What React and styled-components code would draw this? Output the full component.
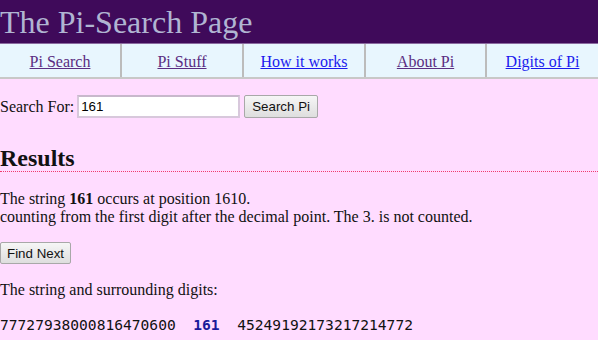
import React from "react";
import styled, { createGlobalStyle } from "styled-components";

const GlobalStyle = createGlobalStyle`
  html, body {
    margin: 0;
    padding: 0;
    background: #ffdcff;
  }
  body {
    font-family: "Liberation Serif", "Times New Roman", serif;
    font-size: 16px;
    color: #111;
  }
`;

const Header = styled.div`
  background: #3f0a5a;
  height: 43px;
  display: flex;
  align-items: center;
`;

const Title = styled.h1`
  margin: 0;
  font-weight: normal;
  font-size: 32px;
  color: #b0b5d2;
  line-height: 43px;
  padding-top: 1px;
`;

const Nav = styled.nav`
  display: grid;
  grid-template-columns: 120px 122px 122px 121px 1fr;
  background: #e8f6fe;
  border-top: 1px solid #8a6aa0;
  border-bottom: 2px solid #c8c8c8;
`;

const NavCell = styled.div`
  height: 33px;
  display: flex;
  align-items: center;
  justify-content: center;
  border-left: ${(p) => (p.first ? "none" : "2px solid #bcbcbc")};
`;

const NavLink = styled.a`
  color: ${(p) => (p.visited ? "#5a2d82" : "#1a1aee")};
  text-decoration: underline;
  font-size: 16px;
  padding-top: 2px;
`;

const SearchRow = styled.form`
  display: flex;
  align-items: center;
  margin-top: 16px;
  height: 23px;
`;

const Label = styled.span`
  margin-right: 3px;
`;

const Input = styled.input`
  box-sizing: border-box;
  width: 163px;
  height: 23px;
  border: 2px solid #d8c8dc;
  border-top-color: #c8b8cc;
  padding: 1px 2px;
  font-family: "Liberation Sans", Arial, sans-serif;
  font-size: 13.33px;
  background: #fff;
  margin-right: 4px;
`;

const Button = styled.button`
  box-sizing: border-box;
  height: ${(p) => p.h || 23}px;
  padding: 0 ${(p) => p.px || 7}px;
  font-family: "Liberation Sans", Arial, sans-serif;
  font-size: 13.33px;
  color: #111;
  background: linear-gradient(#f6f6f6, #dedede);
  border: 1px solid #a8a8a8;
  border-radius: 2px;
`;

const Results = styled.h2`
  margin: 27px 0 0;
  font-size: 24px;
  font-weight: bold;
  line-height: 26px;
  border-bottom: 1px dotted #f03c6e;
`;

const Para = styled.p`
  margin: ${(p) => p.m || "16px 0 0"};
  line-height: 18px;
`;

const Digits = styled.pre`
  margin: 17px 0 0;
  font-family: "DejaVu Sans Mono", "Liberation Mono", monospace;
  font-size: 14.6px;
  color: #111;
`;

const Hit = styled.span`
  color: #1a1a9a;
  font-weight: bold;
`;

const links = [
  ["Pi Search", true],
  ["Pi Stuff", true],
  ["How it works", false],
  ["About Pi", true],
  ["Digits of Pi", false],
];

const App = () => {
  return (
    <>
      <GlobalStyle />
      <Header>
        <Title>The Pi-Search Page</Title>
      </Header>
      <Nav>
        {links.map(([text, visited], i) => (
          <NavCell key={text} first={i === 0}>
            <NavLink href="#" visited={visited}>
              {text}
            </NavLink>
          </NavCell>
        ))}
      </Nav>
      <SearchRow onSubmit={(e) => e.preventDefault()}>
        <Label>Search For:</Label>
        <Input defaultValue="161" />
        <Button type="submit">Search Pi</Button>
      </SearchRow>
      <Results>Results</Results>
      <Para m="18px 0 0">
        The string <b>161</b> occurs at position 1610.
        <br />
        counting from the first digit after the decimal point. The 3. is not
        counted.
      </Para>
      <Para m="16px 0 0">
        <Button h={22} px={6}>Find Next</Button>
      </Para>
      <Para m="17px 0 0">The string and surrounding digits:</Para>
      <Digits>
        {"77727938000816470600  "}
        <Hit>161</Hit>
        {"  45249192173217214772"}
      </Digits>
    </>
  );
};

export default App;
